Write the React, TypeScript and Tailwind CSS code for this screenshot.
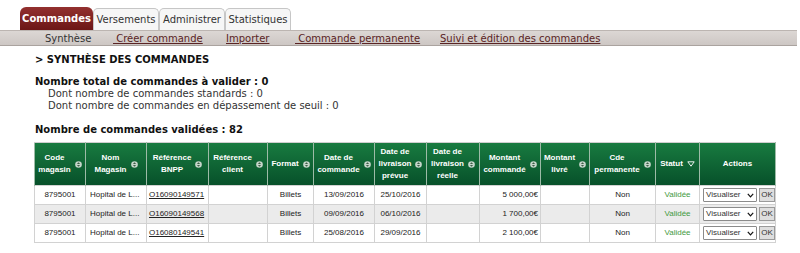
const SortIcon = () => (
  <svg width="7" height="7" viewBox="0 0 8 8" className="shrink-0">
    <circle cx="4" cy="4" r="3.8" fill="#c5d5ca" />
    <path d="M4 1.3 L5.8 3.5 H2.2 Z" fill="#3d5f47" />
    <path d="M4 6.7 L5.8 4.5 H2.2 Z" fill="#3d5f47" />
  </svg>
);

const DownIcon = () => (
  <svg width="8" height="6" viewBox="0 0 8 6" className="shrink-0">
    <path d="M0.8 0.8 H7.2 L4 5.2 Z" fill="none" stroke="#ffffff" strokeWidth="0.9" />
  </svg>
);

interface Col {
  label: string[];
  width: string;
  sort?: "both" | "down";
}

const cols: Col[] = [
  { label: ["Code", "magasin"], width: "w-[51px]", sort: "both" },
  { label: ["Nom", "Magasin"], width: "w-[61px]", sort: "both" },
  { label: ["Référence", "BNPP"], width: "w-[62px]", sort: "both" },
  { label: ["Référence", "client"], width: "w-[59px]", sort: "both" },
  { label: ["Format"], width: "w-[46px]", sort: "both" },
  { label: ["Date de", "commande"], width: "w-[61px]", sort: "both" },
  { label: ["Date de", "livraison", "prévue"], width: "w-[52px]", sort: "both" },
  { label: ["Date de", "livraison", "réelle"], width: "w-[53px]", sort: "both" },
  { label: ["Montant", "commandé"], width: "w-[61px]", sort: "both" },
  { label: ["Montant", "livré"], width: "w-[49px]", sort: "both" },
  { label: ["Cde", "permanente"], width: "w-[66px]", sort: "both" },
  { label: ["Statut"], width: "w-[44px]", sort: "down" },
  { label: ["Actions"], width: "w-[76px]" },
];

const rows = [
  { ref: "O16090149571", cmd: "13/09/2016", prev: "25/10/2016", montant: "5 000,00€" },
  { ref: "O16090149568", cmd: "09/09/2016", prev: "06/10/2016", montant: "1 700,00€" },
  { ref: "O16080149541", cmd: "25/08/2016", prev: "29/09/2016", montant: "2 100,00€" },
];

const tabs = ["Versements", "Administrer", "Statistiques"];

export default function App() {
  return (
    <div className="w-[800px] h-[253px] bg-white font-['DejaVu_Sans',Verdana,sans-serif] text-[10px] text-[#222] overflow-hidden">
      {/* onglets */}
      <div className="flex items-end h-[30px] pl-[20px]">
        <div className="w-[73px] h-[23px] rounded-t-[6px] bg-gradient-to-b from-[#93302f] to-[#6c1616] text-white font-bold flex items-center justify-center">
          Commandes
        </div>
        {tabs.map((t) => (
          <div
            key={t}
            className="w-[66px] h-[22px] rounded-t-[5px] bg-[#f6f6f6] border border-b-0 border-[#c6c6c6] text-[#333] flex items-center justify-center"
          >
            {t}
          </div>
        ))}
      </div>

      {/* sous-menu */}
      <div className="h-[16px] w-[797px] bg-gradient-to-b from-[#dcd7d4] to-[#cdc7c4] border-t border-[#bcb5b1] border-b border-b-[#aaa39f] flex items-center pl-[45px]">
        <span className="w-[68px] text-[#333]">Synthèse</span>
        <span className="w-[113px]">
          <a className="underline text-[#5a2424] whitespace-pre">{" Créer commande"}</a>
        </span>
        <span className="w-[69px]">
          <a className="underline text-[#5a2424]">Importer</a>
        </span>
        <span className="w-[145px]">
          <a className="underline text-[#5a2424] whitespace-pre">{" Commande permanente"}</a>
        </span>
        <a className="underline text-[#5a2424]">Suivi et édition des commandes</a>
      </div>

      <div className="pl-[34px]">
        <div className="mt-[8px] pl-[1px] font-bold leading-[12px] text-[#111]">&gt; SYNTHÈSE DES COMMANDES</div>

        <div className="mt-[10px] pl-[1px] font-bold leading-[12px] text-[#111]">
          Nombre total de commandes à valider : 0
        </div>
        <div className="pl-[14px] leading-[11.5px] text-[#333]">
          <div>Dont nombre de commandes standards : 0</div>
          <div>Dont nombre de commandes en dépassement de seuil : 0</div>
        </div>

        <div className="mt-[13px] pl-[1px] font-bold leading-[12px] text-[#111]">
          Nombre de commandes validées : 82
        </div>

        <table className="mt-[6px] w-[741px] table-fixed border-collapse font-['Liberation_Sans',Arial,sans-serif] text-[8px]">
          <thead>
            <tr className="h-[43px] bg-gradient-to-b from-[#187b40] to-[#07502a]">
              {cols.map((c, i) => (
                <th
                  key={i}
                  className={`${c.width} p-0 border-x border-[#9dbba7] border-t border-t-[#cfcfcf] text-white font-bold leading-[12px]`}
                >
                  <div className="flex items-center justify-center gap-[4px]">
                    <span className="text-center">
                      {c.label.map((l) => (
                        <div key={l}>{l}</div>
                      ))}
                    </span>
                    {c.sort === "both" && <SortIcon />}
                    {c.sort === "down" && <DownIcon />}
                  </div>
                </th>
              ))}
            </tr>
          </thead>
          <tbody>
            {rows.map((r, i) => (
              <tr key={r.ref} className={`h-[19px] ${i === 1 ? "bg-[#ebebeb]" : "bg-white"}`}>
                <td className="border border-[#d2d2d2] text-center">8795001</td>
                <td className="border border-[#d2d2d2] pl-[4px] whitespace-nowrap">Hopital de L...</td>
                <td className="border border-[#d2d2d2] pl-[2px]">
                  <a className="underline">{r.ref}</a>
                </td>
                <td className="border border-[#d2d2d2]"></td>
                <td className="border border-[#d2d2d2] text-center">Billets</td>
                <td className="border border-[#d2d2d2] text-center">{r.cmd}</td>
                <td className="border border-[#d2d2d2] text-center">{r.prev}</td>
                <td className="border border-[#d2d2d2]"></td>
                <td className="border border-[#d2d2d2] text-right pr-[2px]">{r.montant}</td>
                <td className="border border-[#d2d2d2]"></td>
                <td className="border border-[#d2d2d2] text-center">Non</td>
                <td className="border border-[#d2d2d2] text-center text-[#3f9a3f]">Validée</td>
                <td className="border border-[#d2d2d2] pl-[3px]">
                  <div className="flex items-center">
                    <div className="w-[54px] h-[14px] bg-white border border-[#8a8a8a] rounded-[1px] flex items-center justify-between pl-[2px] pr-[2px] text-[#333]">
                      <span>Visualiser</span>
                      <svg width="7" height="5" viewBox="0 0 7 5">
                        <path d="M0.8 0.8 L3.5 3.8 L6.2 0.8" fill="none" stroke="#111" strokeWidth="1.2" />
                      </svg>
                    </div>
                    <div className="ml-[2px] w-[16px] h-[14px] bg-[#dedede] border border-[#9a9a9a] flex items-center justify-center text-[#333]">
                      OK
                    </div>
                  </div>
                </td>
              </tr>
            ))}
          </tbody>
        </table>
      </div>
    </div>
  );
}
